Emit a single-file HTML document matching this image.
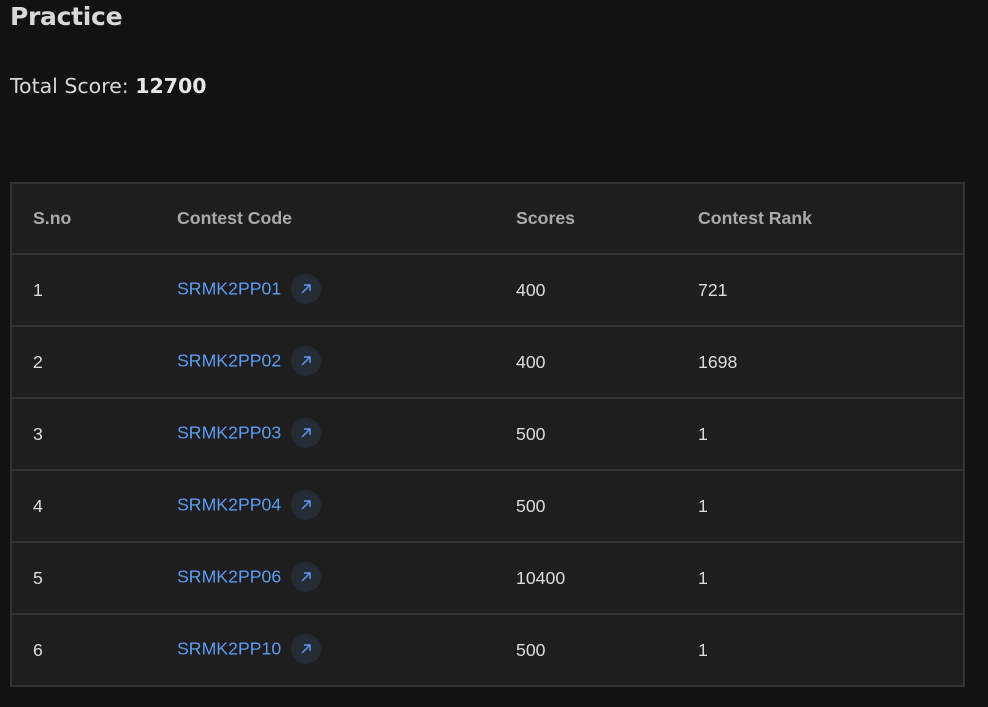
<!DOCTYPE html>
<html><head><meta charset="utf-8"><style>
*{margin:0;padding:0;box-sizing:border-box}
body{width:988px;height:707px;background:#121212;font-family:"DejaVu Sans","Liberation Sans",sans-serif;color:#ddd;overflow:hidden;position:relative}
h1{position:absolute;left:10px;top:2px;font-size:25px;font-weight:bold;color:#d8d8d8;letter-spacing:-0.3px}
.ts{position:absolute;left:10px;top:74px;font-size:20.5px;color:#d8d8d8}
.ts b{color:#e6e6e6}
table{position:absolute;left:10px;top:182px;width:955px;border-collapse:collapse;background:#1e1e1e;font-family:"Liberation Sans",sans-serif;font-size:17.7px;border:2px solid #333}
td,th{height:72px;border-bottom:2px solid #333;text-align:left;padding:0;vertical-align:middle}
th{color:#aaa;font-weight:bold;height:71px}
td{color:#ddd}
.c1{padding-left:21px;width:166px}
.c2{width:339px}
.c3{width:182px}
a{color:#5b9cf0;text-decoration:none}
.ic{display:inline-block;width:30px;height:30px;border-radius:50%;background:#262c36;vertical-align:middle;margin-left:10px;position:relative;top:-1px}
.ic svg{position:absolute;left:8px;top:8px}
</style></head><body>
<h1>Practice</h1>
<div class="ts">Total Score: <b>12700</b></div>
<table>
<tr><th class="c1">S.no</th><th class="c2">Contest Code</th><th class="c3">Scores</th><th>Contest Rank</th></tr>
<tr><td class="c1">1</td><td><a>SRMK2PP01</a><span class="ic"><svg width="14" height="14" viewBox="0 0 14 14"><path d="M3 11L11 3M5 3H11V9" stroke="#5b9cf0" stroke-width="1.4" fill="none"/></svg></span></td><td>400</td><td>721</td></tr>
<tr><td class="c1">2</td><td><a>SRMK2PP02</a><span class="ic"><svg width="14" height="14" viewBox="0 0 14 14"><path d="M3 11L11 3M5 3H11V9" stroke="#5b9cf0" stroke-width="1.4" fill="none"/></svg></span></td><td>400</td><td>1698</td></tr>
<tr><td class="c1">3</td><td><a>SRMK2PP03</a><span class="ic"><svg width="14" height="14" viewBox="0 0 14 14"><path d="M3 11L11 3M5 3H11V9" stroke="#5b9cf0" stroke-width="1.4" fill="none"/></svg></span></td><td>500</td><td>1</td></tr>
<tr><td class="c1">4</td><td><a>SRMK2PP04</a><span class="ic"><svg width="14" height="14" viewBox="0 0 14 14"><path d="M3 11L11 3M5 3H11V9" stroke="#5b9cf0" stroke-width="1.4" fill="none"/></svg></span></td><td>500</td><td>1</td></tr>
<tr><td class="c1">5</td><td><a>SRMK2PP06</a><span class="ic"><svg width="14" height="14" viewBox="0 0 14 14"><path d="M3 11L11 3M5 3H11V9" stroke="#5b9cf0" stroke-width="1.4" fill="none"/></svg></span></td><td>10400</td><td>1</td></tr>
<tr><td class="c1">6</td><td><a>SRMK2PP10</a><span class="ic"><svg width="14" height="14" viewBox="0 0 14 14"><path d="M3 11L11 3M5 3H11V9" stroke="#5b9cf0" stroke-width="1.4" fill="none"/></svg></span></td><td>500</td><td>1</td></tr>
</table>
</body></html>
